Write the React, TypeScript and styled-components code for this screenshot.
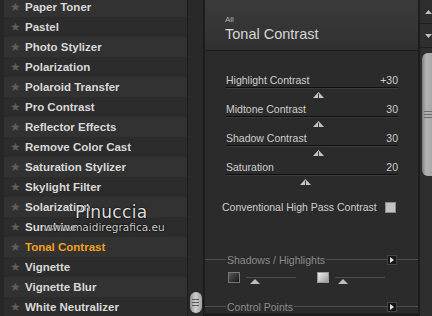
import React from 'react';
import styled, { createGlobalStyle } from 'styled-components';

const Global = createGlobalStyle`
  html, body { margin: 0; padding: 0; background: #2b2b2b; overflow: hidden; }
  #root { width: 432px; height: 316px; }
`;

const Frame = styled.div`
  position: relative;
  display: flex;
  width: 432px;
  height: 316px;
  overflow: hidden;
  background: #2b2b2b;
  font-family: "Liberation Sans", Arial, sans-serif;
`;

const Sidebar = styled.div`
  flex: none;
  width: 188px;
  box-sizing: border-box;
  padding-left: 4px;
  background: #272727;
  border-right: 1px solid #1b1b1b;
  overflow: hidden;
`;

const List = styled.ul`
  list-style: none;
  margin: -3px 0 0;
  padding: 0;
`;

const Item = styled.li<{ $alt: boolean; $active: boolean }>`
  display: flex;
  align-items: center;
  height: 20px;
  background: ${p => (p.$alt ? '#2c2c2c' : '#323232')};
  color: ${p => (p.$active ? '#f4a020' : '#d9d9d9')};
  font-size: 11.5px;
  font-weight: bold;
  white-space: nowrap;
`;

const Star = styled.span`
  flex: none;
  width: 21px;
  box-sizing: border-box;
  padding-left: 6px;
  color: #5e5e5e;
  font-family: "DejaVu Sans", sans-serif;
  font-size: 12px;
`;

const LeftScroll = styled.div`
  flex: none;
  width: 16px;
  box-sizing: border-box;
  background: #292929;
  border-right: 1px solid #1a1a1a;
  display: flex;
  flex-direction: column;
  justify-content: flex-end;
  align-items: center;
  padding-bottom: 3px;
`;

const Thumb = styled.div`
  width: 12px;
  height: 21px;
  border-radius: 6px;
  background: linear-gradient(90deg, #8e8e8e, #cfcfcf 45%, #a0a0a0);
  display: flex;
  flex-direction: column;
  justify-content: center;
  align-items: center;
  gap: 2px;
`;

const Grip = styled.div`
  width: 7px;
  height: 1px;
  background: #5a5a5a;
`;

const Main = styled.div`
  flex: 1;
  display: flex;
  flex-direction: column;
  border-bottom: 3px solid #1e1e1e;
  box-sizing: border-box;
  border-left: 1px solid #1f1f1f;
`;

const Header = styled.div`
  flex: none;
  height: 51px;
  box-sizing: border-box;
  padding: 15px 0 0 20px;
  background: linear-gradient(180deg, #3a3a3a, #333333 80%, #2f2f2f);
  border-bottom: 1px solid #1c1c1c;
`;

const Crumb = styled.div`
  font-size: 8px;
  line-height: 10px;
  color: #b0b0b0;
`;

const Title = styled.div`
  font-size: 14.5px;
  line-height: 19px;
  color: #d6d6d6;
`;

const Controls = styled.div`
  padding: 22px 0 0 21px;
`;

const SliderRow = styled.div`
  width: 172px;
  margin-bottom: 5px;
`;

const LabelLine = styled.div`
  display: flex;
  justify-content: space-between;
  height: 14px;
  line-height: 14px;
  font-size: 10.5px;
  color: #cfcfcf;
`;

const Track = styled.div`
  height: 1px;
  background: #0f0f0f;
  border-bottom: 1px solid #3a3a3a;
`;

const KnobZone = styled.div`
  position: relative;
  height: 8px;
`;

const KnobWrap = styled.div`
  position: absolute;
  top: 3px;
  width: 11px;
  height: 6px;
  margin-left: -5px;
  line-height: 0;
`;

const Knob = ({ x }: { x: number }) => (
  <KnobWrap style={{ left: x }}>
    <svg width="11" height="6" viewBox="0 0 11 6">
      <polygon points="0,6 5.5,0 11,6" fill="#c4c4c4" />
      <line x1="5.5" y1="1.5" x2="5.5" y2="6" stroke="#3a3a3a" strokeWidth="1" />
    </svg>
  </KnobWrap>
);

const CheckRow = styled.div`
  display: flex;
  align-items: center;
  gap: 8px;
  margin: 16px 0 0 -4px;
  height: 14px;
  font-size: 10.5px;
  color: #cfcfcf;
`;

const CheckBox = styled.div`
  width: 9px;
  height: 9px;
  background: #c2c2c2;
  border: 1px solid #8a8a8a;
`;

const Section = styled.div<{ $top: number }>`
  display: flex;
  align-items: center;
  height: 13px;
  margin-top: ${p => p.$top}px;
  font-size: 10.5px;
  color: #8c8c8c;
`;

const Rule = styled.div<{ $w?: number }>`
  height: 1px;
  background: #505050;
  ${p => (p.$w ? `width: ${p.$w}px; flex: none;` : 'flex: 1;')}
`;

const SectionText = styled.span`
  padding: 0 1px;
  white-space: nowrap;
`;

const Expand = styled.div`
  flex: none;
  width: 10px;
  height: 10px;
  box-sizing: border-box;
  background: #161616;
  border: 1px solid #444;
  display: flex;
  align-items: center;
  justify-content: center;
`;

const MiniRow = styled.div`
  display: flex;
  align-items: flex-start;
  height: 14px;
  margin-top: 5px;
  padding-left: 23px;
`;

const Swatch = styled.div<{ $light: boolean }>`
  flex: none;
  width: 12px;
  height: 11px;
  margin-top: 1px;
  box-sizing: border-box;
  border: 1px solid ${p => (p.$light ? '#9a9a9a' : '#777')};
  background: ${p =>
    p.$light
      ? 'linear-gradient(135deg, #f0f0f0, #9a9a9a)'
      : 'linear-gradient(135deg, #5a5a5a, #151515)'};
`;

const Mini = styled.div<{ $gapAfter: number }>`
  position: relative;
  flex: none;
  width: 50px;
  height: 14px;
  margin-left: 6px;
  margin-right: ${p => p.$gapAfter}px;
`;

const MiniLine = styled.div`
  position: absolute;
  left: 0;
  right: 0;
  top: 6px;
  height: 1px;
  background: #4e4e4e;
`;

const MiniKnob = styled.div`
  position: absolute;
  top: 8px;
  line-height: 0;
`;

const RightScroll = styled.div`
  flex: none;
  width: 14px;
  box-sizing: border-box;
  border-left: 2px solid #1d1d1d;
  background: #2e2e2e;
  display: flex;
  flex-direction: column;
`;

const ArrowBtn = styled.div<{ $h: number }>`
  height: ${p => p.$h}px;
  box-sizing: border-box;
  border-bottom: 1px solid #1e1e1e;
  display: flex;
  align-items: center;
  justify-content: center;
  padding-left: 4px;
  line-height: 0;
`;

const BigThumb = styled.div`
  margin: 5px 0 0 2px;
  height: 123px;
  border-radius: 6px 0 0 6px;
  background: linear-gradient(90deg, #7d7d7d, #b4b4b4 40%, #a8a8a8);
  display: flex;
  flex-direction: column;
  justify-content: center;
  align-items: flex-end;
  gap: 2px;
`;

const BigGrip = styled.div`
  width: 8px;
  height: 1px;
  background: #6a6a6a;
`;

const Watermark = styled.div`
  position: absolute;
  left: 44px;
  top: 203px;
  pointer-events: none;
  text-shadow: 0 0 2px #000, 0 0 1px #000;
  color: #dedede;
  font-family: "DejaVu Sans", sans-serif;
`;

const WmName = styled.div`
  margin-left: 31px;
  font-size: 17px;
  line-height: 18px;
  letter-spacing: 0.3px;
`;

const WmUrl = styled.div`
  font-size: 10.5px;
  line-height: 13px;
  color: #cfcfcf;
`;

const items = [
  'Paper Toner', 'Pastel', 'Photo Stylizer', 'Polarization', 'Polaroid Transfer',
  'Pro Contrast', 'Reflector Effects', 'Remove Color Cast', 'Saturation Stylizer',
  'Skylight Filter', 'Solarization', 'Sunshine', 'Tonal Contrast', 'Vignette',
  'Vignette Blur', 'White Neutralizer',
];

const sliders = [
  { label: 'Highlight Contrast', value: '+30', knob: 92 },
  { label: 'Midtone Contrast', value: '30', knob: 92 },
  { label: 'Shadow Contrast', value: '30', knob: 92 },
  { label: 'Saturation', value: '20', knob: 79 },
];

const PlayIcon = () => (
  <svg width="4" height="6" viewBox="0 0 4 6">
    <polygon points="0,0 4,3 0,6" fill="#e0e0e0" />
  </svg>
);

const SmallKnob = () => (
  <svg width="10" height="5" viewBox="0 0 10 5">
    <polygon points="0,5 5,0 10,5" fill="#bdbdbd" />
  </svg>
);

export default function App() {
  return (
    <>
      <Global />
      <Frame>
        <Sidebar>
          <List>
            {items.map((t, i) => (
              <Item key={t} $alt={i % 2 === 1} $active={t === 'Tonal Contrast'}>
                <Star>★</Star>
                {t}
              </Item>
            ))}
          </List>
        </Sidebar>
        <LeftScroll>
          <Thumb>
            <Grip />
            <Grip />
            <Grip />
          </Thumb>
        </LeftScroll>
        <Main>
          <Header>
            <Crumb>All</Crumb>
            <Title>Tonal Contrast</Title>
          </Header>
          <Controls>
            {sliders.map(s => (
              <SliderRow key={s.label}>
                <LabelLine>
                  <span>{s.label}</span>
                  <span>{s.value}</span>
                </LabelLine>
                <Track />
                <KnobZone>
                  <Knob x={s.knob} />
                </KnobZone>
              </SliderRow>
            ))}
            <CheckRow>
              <span>Conventional High Pass Contrast</span>
              <CheckBox />
            </CheckRow>
          </Controls>
          <Section $top={39}>
            <Rule $w={21} />
            <SectionText>Shadows / Highlights</SectionText>
            <Rule />
            <Expand><PlayIcon /></Expand>
            <Rule $w={21} />
          </Section>
          <MiniRow>
            <Swatch $light={false} />
            <Mini $gapAfter={21}>
              <MiniLine />
              <MiniKnob style={{ left: 4 }}><SmallKnob /></MiniKnob>
            </Mini>
            <Swatch $light />
            <Mini $gapAfter={0}>
              <MiniLine />
              <MiniKnob style={{ left: 3 }}><SmallKnob /></MiniKnob>
            </Mini>
          </MiniRow>
          <Section $top={15}>
            <Rule $w={21} />
            <SectionText>Control Points</SectionText>
            <Rule />
            <Expand><PlayIcon /></Expand>
            <Rule $w={21} />
          </Section>
        </Main>
        <RightScroll>
          <ArrowBtn $h={24}>
            <svg width="7" height="4" viewBox="0 0 7 4"><polygon points="0,4 3.5,0 7,4" fill="#bdbdbd" /></svg>
          </ArrowBtn>
          <ArrowBtn $h={24}>
            <svg width="7" height="4" viewBox="0 0 7 4"><polygon points="0,0 3.5,4 7,0" fill="#bdbdbd" /></svg>
          </ArrowBtn>
          <BigThumb>
            <BigGrip />
            <BigGrip />
            <BigGrip />
          </BigThumb>
        </RightScroll>
        <Watermark>
          <WmName>Pinuccia</WmName>
          <WmUrl>www.maidiregrafica.eu</WmUrl>
        </Watermark>
      </Frame>
    </>
  );
}
